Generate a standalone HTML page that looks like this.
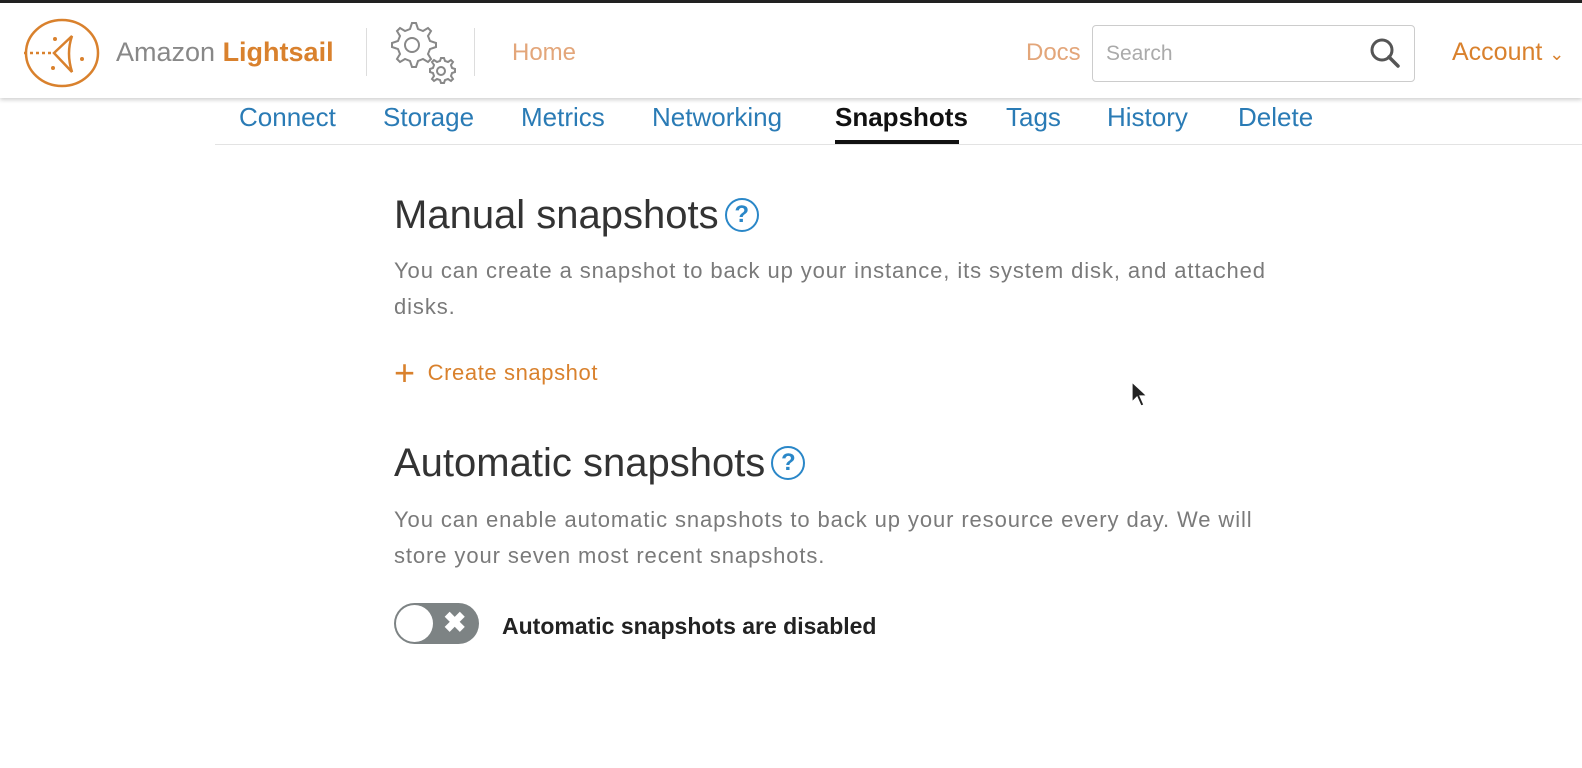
<!DOCTYPE html>
<html><head><meta charset="utf-8"><style>
*{margin:0;padding:0;box-sizing:border-box}
body{width:1582px;height:768px;overflow:hidden;background:#fff;font-family:"Liberation Sans",sans-serif;position:relative}
.abs{position:absolute;white-space:nowrap}
.top{position:absolute;left:0;top:0;width:1582px;height:3px;background:#222}
.hdr{position:absolute;left:0;top:3px;width:1582px;height:95px;background:#fff;box-shadow:0 2px 4px rgba(0,0,0,.18)}
.tab{position:absolute;top:102px;font-size:26px;color:#2a7bb5}
.h{font-size:40px;color:#333}
.p{font-size:22px;letter-spacing:.9px;color:#7a7a7a;line-height:36px}
.q{display:inline-block;width:34px;height:34px;border:2.5px solid #2a87c8;border-radius:50%;color:#2a87c8;font-size:24px;text-align:center;line-height:29px;font-weight:bold;vertical-align:6px;margin-left:6px}
</style></head><body>
<div class="top"></div>
<div class="hdr">
<svg class="abs" style="left:22px;top:14px" width="80" height="72" viewBox="0 0 80 72"><g fill="none" stroke="#d9812d" stroke-width="2.5"><ellipse cx="40" cy="36" rx="36" ry="33"/><path d="M32 36 L50 19 Q44 36 50 55 Z"/><path d="M2 36 H32" stroke-dasharray="3 3"/></g><g fill="#d9812d"><circle cx="33" cy="22" r="2"/><circle cx="60" cy="42" r="2"/><circle cx="31" cy="51" r="2"/></g></svg>
<div class="abs" style="left:116px;top:34px;font-size:27px;color:#888">Amazon <b style="color:#d9812d">Lightsail</b></div>
<div class="abs" style="left:366px;top:25px;width:1px;height:48px;background:#ddd"></div>
<svg class="abs" style="left:384px;top:12px" width="76" height="72" viewBox="0 0 76 72"><g fill="none" stroke="#888" stroke-width="2"><circle cx="28" cy="30" r="7"/><path d="M28 8 l4 0 2 6 5 2 5-3 3 3-3 5 2 5 6 2 0 4-6 2-2 5 3 5-3 3-5-3-5 2-2 6-4 0-2-6-5-2-5 3-3-3 3-5-2-5-6-2 0-4 6-2 2-5-3-5 3-3 5 3 5-2z"/><circle cx="57" cy="56" r="4"/><path d="M57 43 l3 0 1 3 3 1 3-2 2 2-2 3 1 3 3 1 0 3-3 1-1 3 2 3-2 2-3-2-3 1-1 3-3 0-1-3-3-1-3 2-2-2 2-3-1-3-3-1 0-3 3-1 1-3-2-3 2-2 3 2 3-1z"/></g></svg>
<div class="abs" style="left:474px;top:25px;width:1px;height:48px;background:#ddd"></div>
<div class="abs" style="left:512px;top:36px;font-size:24px;color:#e3a67a">Home</div>
<div class="abs" style="left:1026px;top:36px;font-size:24px;color:#e3a67a">Docs</div>
<div class="abs" style="left:1092px;top:22px;width:323px;height:57px;border:1.5px solid #ccc;border-radius:4px"></div>
<div class="abs" style="left:1106px;top:39px;font-size:21px;color:#aaa">Search</div>
<svg class="abs" style="left:1368px;top:33px" width="34" height="34" viewBox="0 0 34 34"><circle cx="14" cy="14" r="10" fill="none" stroke="#555" stroke-width="3"/><path d="M21 21 L30 30" stroke="#555" stroke-width="3.5" stroke-linecap="round"/></svg>
<div class="abs" style="left:1452px;top:35px;font-size:25px;color:#d9812d">Account <span style="font-size:18px">&#8964;</span></div>
</div>
<div class="tab" style="left:239px">Connect</div>
<div class="tab" style="left:383px">Storage</div>
<div class="tab" style="left:521px">Metrics</div>
<div class="tab" style="left:652px">Networking</div>
<div class="tab" style="left:835px;color:#111;font-weight:bold">Snapshots</div>
<div class="abs" style="left:835px;top:140px;width:124px;height:4px;background:#111"></div>
<div class="tab" style="left:1006px">Tags</div>
<div class="tab" style="left:1107px">History</div>
<div class="tab" style="left:1238px">Delete</div>
<div class="abs" style="left:215px;top:144px;width:1367px;height:1px;background:#e3e3e3"></div>

<div class="abs h" style="left:394px;top:193px">Manual snapshots<span class="q">?</span></div>
<div class="abs p" style="left:394px;top:253px">You can create a snapshot to back up your instance, its system disk, and attached<br>disks.</div>
<div class="abs" style="left:394px;top:352px;font-size:22px;letter-spacing:.6px;color:#d9812d"><span style="font-size:36px;vertical-align:-5px;margin-right:12px">+</span>Create snapshot</div>
<svg class="abs" style="left:1131px;top:381px" width="18" height="28" viewBox="0 0 18 28"><path d="M1 1 L1 21 L6 16 L10 25 L13 24 L9 15 L16 15 Z" fill="#222" stroke="#fff" stroke-width="1.2"/></svg>

<div class="abs h" style="left:394px;top:441px">Automatic snapshots<span class="q">?</span></div>
<div class="abs p" style="left:394px;top:502px">You can enable automatic snapshots to back up your resource every day. We will<br>store your seven most recent snapshots.</div>
<div class="abs" style="left:394px;top:603px;width:85px;height:41px;border-radius:21px;background:#7d8384"></div>
<div class="abs" style="left:396px;top:605px;width:37px;height:37px;border-radius:50%;background:#fff"></div>
<div class="abs" style="left:443px;top:606px;font-size:28px;color:#fff;font-weight:bold">&#10006;</div>
<div class="abs" style="left:502px;top:613px;font-size:23px;color:#222;font-weight:bold">Automatic snapshots are disabled</div>
</body></html>
